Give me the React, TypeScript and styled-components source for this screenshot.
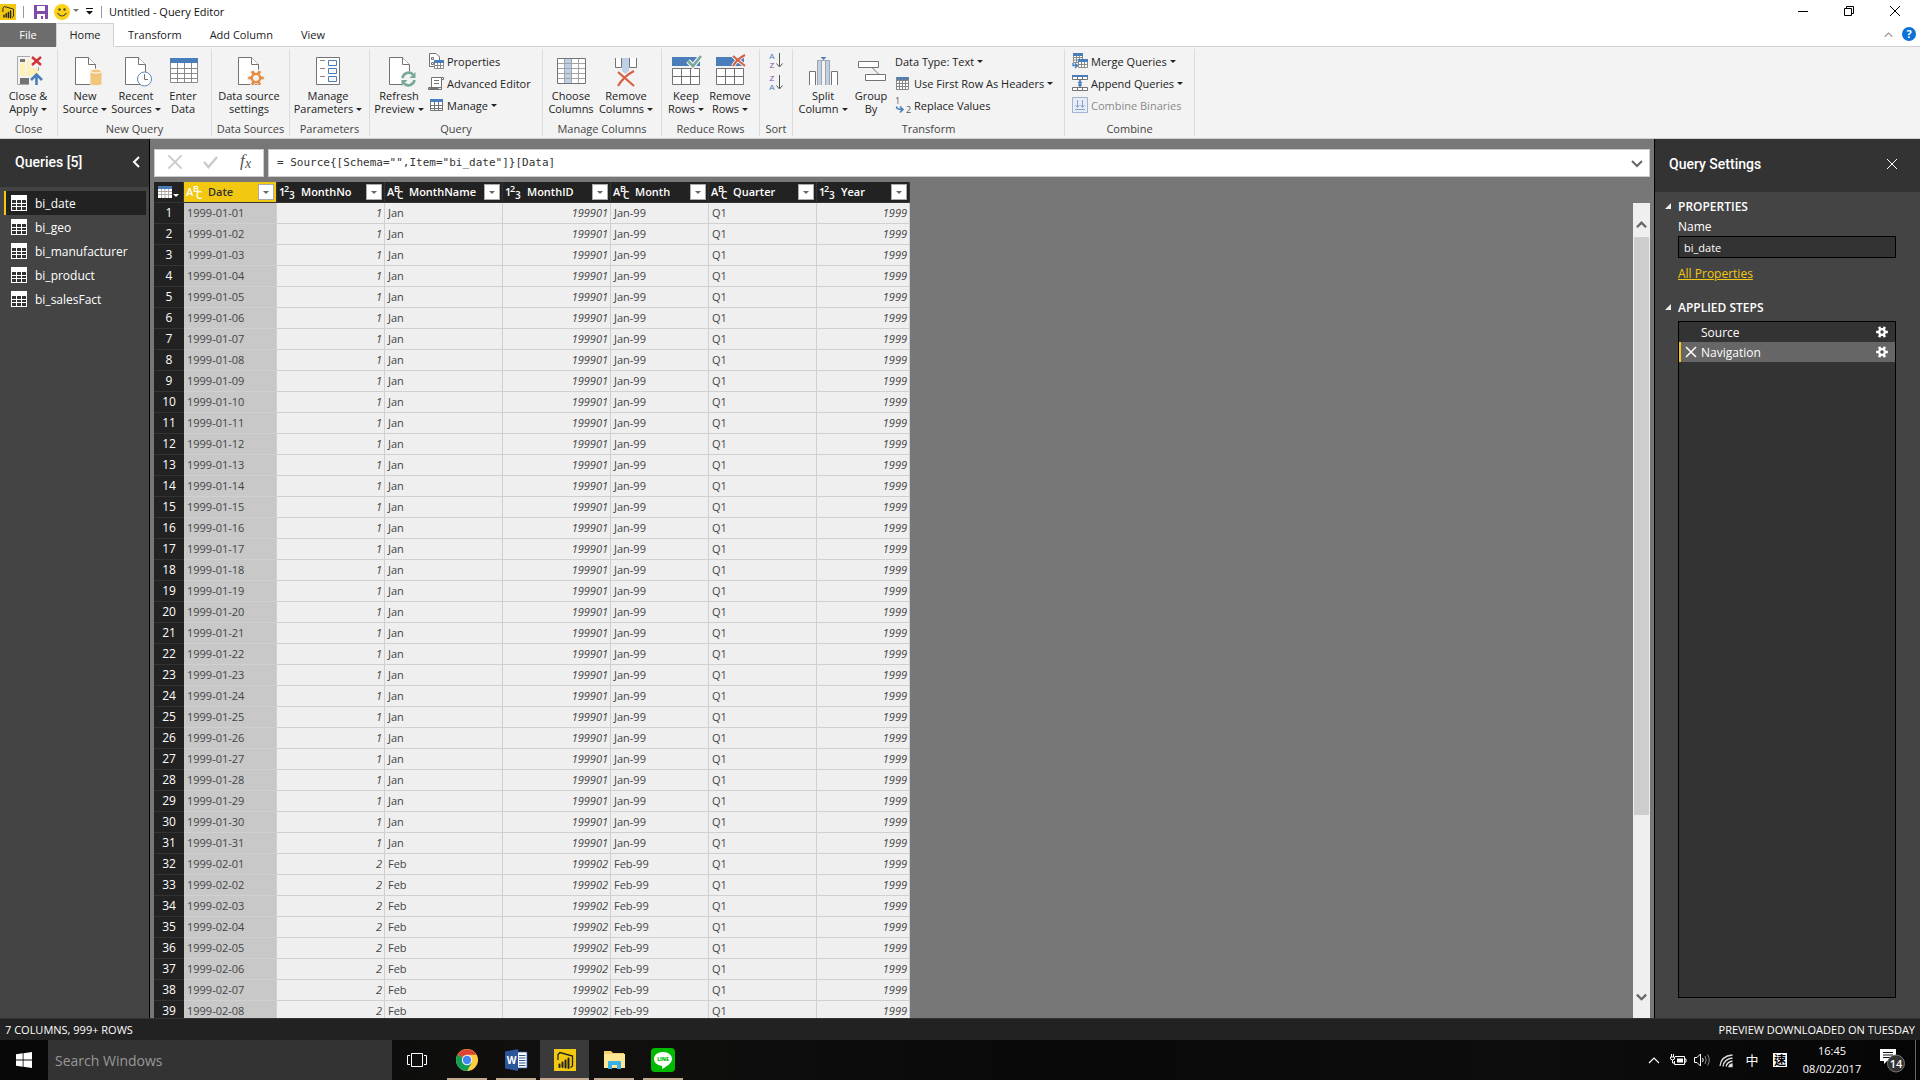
import React from "react";
import styled, { createGlobalStyle, css } from "styled-components";

const ui = '"Open Sans", "Noto Sans", "Noto Sans CJK TC", sans-serif';

const GlobalStyle = createGlobalStyle`
  *, *::before, *::after { box-sizing: border-box; }
  html, body { margin: 0; padding: 0; }
  body { font-family: ${ui}; font-size: 11px; color: #222; overflow: hidden; }
  button, input { font: inherit; color: inherit; border: 0; padding: 0; margin: 0; background: none; border-radius: 0; }
  svg { display: block; flex: none; overflow: visible; }
  h1, h2, h3, p, ul, ol { margin: 0; padding: 0; font-size: inherit; font-weight: inherit; list-style: none; }
`;

const App_ = styled.div`
  height: 100vh;
  display: flex;
  flex-direction: column;
  background: #fff;
`;

/* ---------- Title bar ---------- */

const TitleBar = styled.header`
  display: flex;
  align-items: center;
  height: 23px;
  flex: none;
  padding-right: 2px;
`;
const QuickAccess = styled.div`
  display: flex;
  align-items: center;
  flex: none;
  width: 109px;
`;
const QuickButton = styled.button<{ $w: number }>`
  display: flex;
  justify-content: center;
  align-items: center;
  width: ${(p) => p.$w}px;
  height: 18px;
`;
const Divider = styled.span`
  width: 1px;
  height: 12px;
  background: #999;
`;
const Title = styled.h1`
  flex: 1;
  color: #111;
`;
const WindowButton = styled.button`
  width: 46px;
  height: 20px;
  display: grid;
  place-items: center;
  padding-bottom: 2px;
`;

/* ---------- Tabs ---------- */

const TabBar = styled.nav`
  display: flex;
  align-items: stretch;
  height: 24px;
  flex: none;
  box-shadow: inset 0 -1px #d2d2d2;
`;
const Tab = styled.button<{ $kind?: "file" | "active" }>`
  padding: 0 14px 2px;
  ${(p) =>
    p.$kind === "file" &&
    css`
      background: #6d6d6d;
      color: #fff;
      width: 56px;
    `}
  ${(p) =>
    p.$kind === "active" &&
    css`
      background: #f3f3f3;
      border: 1px solid #d2d2d2;
      border-bottom-color: #f3f3f3;
      width: 58px;
      padding: 0 0 2px;
    `}
`;
const TabTools = styled.div`
  display: flex;
  align-items: center;
  gap: 9px;
  margin-left: auto;
  padding: 0 4px 2px 0;
`;
const PlainButton = styled.button`
  display: flex;
  align-items: center;
  justify-content: center;
`;

/* ---------- Ribbon ---------- */

const RibbonBar = styled.div`
  display: flex;
  flex: none;
  height: 92px;
  padding: 2px 0;
  background: #f3f3f3;
  border-bottom: 1px solid #cfd1cf;
`;
const Group = styled.section<{ $w: number }>`
  display: flex;
  flex-direction: column;
  flex: none;
  width: ${(p) => p.$w}px;
  border-right: 1px solid #dcdcdc;
`;
const GroupBody = styled.div<{ $pad?: number }>`
  display: flex;
  flex: 1;
  padding-left: ${(p) => p.$pad ?? 0}px;
`;
const GroupLabel = styled.h2`
  height: 15px;
  line-height: 15px;
  text-align: center;
  white-space: nowrap;
  color: #444;
`;
const LargeButton = styled.button<{ $w: number }>`
  width: ${(p) => p.$w}px;
  flex: none;
  display: flex;
  flex-direction: column;
  align-items: center;
  padding-top: 6px;
  gap: 2px;
  line-height: 13px;
  white-space: nowrap;
`;
const LargeLabel = styled.span`
  display: flex;
  flex-direction: column;
  align-items: center;
`;
const SmallStack = styled.div<{ $pad?: number }>`
  display: flex;
  flex-direction: column;
  padding-top: 1px;
  padding-left: ${(p) => p.$pad ?? 0}px;
`;
const SmallButton = styled.button<{ $muted?: boolean }>`
  display: flex;
  align-items: center;
  gap: 3px;
  height: 22px;
  white-space: nowrap;
  color: ${(p) => (p.$muted ? "#8a8a8a" : "inherit")};
`;
const Caret = styled.span<{ $tone?: string }>`
  display: inline-block;
  vertical-align: middle;
  margin: 0 0 2px 3px;
  border: 3px solid transparent;
  border-bottom: 0;
  border-top-color: ${(p) => p.$tone ?? "#222"};
`;

/* ---------- Workspace ---------- */

const Workspace = styled.main`
  flex: 1;
  min-height: 0;
  display: flex;
  background: #777;
`;
const QueriesPanel = styled.aside`
  width: 150px;
  flex: none;
  background: #444;
  border-right: 1px solid #000;
  color: #fff;
`;
const PanelHeader = styled.header<{ $h: number; $l: number; $r: number }>`
  display: flex;
  justify-content: space-between;
  align-items: center;
  height: ${(p) => p.$h}px;
  padding: 0 ${(p) => p.$r}px 3px ${(p) => p.$l}px;
  background: #333;
  font-family: Roboto, ${ui};
  font-size: 14px;
  font-weight: 500;
  color: #fff;
`;
const QueryList = styled.ul`
  padding: 4px 3px 0 4px;
`;
const QueryItem = styled.button<{ $on: boolean }>`
  display: flex;
  align-items: center;
  gap: 8px;
  width: 100%;
  height: 24px;
  padding-left: 5px;
  border-left: 2px solid ${(p) => (p.$on ? "#f2c811" : "transparent")};
  background: ${(p) => (p.$on ? "#222" : "transparent")};
  font-size: 12px;
  text-align: left;
`;

const Editor = styled.section`
  flex: 1;
  min-width: 0;
  display: flex;
  flex-direction: column;
  gap: 5px;
  padding: 10px 4px 0 4px;
`;
const FormulaRow = styled.div`
  display: flex;
  gap: 4px;
  height: 28px;
  flex: none;
`;
const FormulaTools = styled.div`
  display: flex;
  align-items: center;
  justify-content: space-around;
  width: 110px;
  padding: 0 0 2px 2px;
  background: #fff;
  border: 1px solid #ccc;
`;
const FormulaBox = styled.div`
  flex: 1;
  display: flex;
  align-items: center;
  padding: 0 6px 1px 8px;
  background: #fff;
  border: 1px solid #ccc;
`;
const FormulaInput = styled.input`
  flex: 1;
  outline: 0;
  font-family: "DejaVu Sans Mono", monospace;
  font-size: 11px;
  color: #333;
`;
const GridArea = styled.div`
  flex: 1;
  min-height: 0;
  display: flex;
  justify-content: space-between;
`;
const GridClip = styled.div`
  overflow: hidden;
`;
const Grid = styled.table`
  table-layout: fixed;
  width: 756px;
  border-collapse: separate;
  border-spacing: 0;
`;
const HeadCell = styled.th<{ $on?: boolean }>`
  height: 21px;
  padding: 0 2px;
  text-align: left;
  background: ${(p) => (p.$on ? "#f2c811" : "#222")};
  color: ${(p) => (p.$on ? "#333" : "#fff")};
  border-right: 1px solid #333;
  border-bottom: 1px solid #333;
`;
const HeadInner = styled.div`
  display: flex;
  align-items: center;
  gap: 6px;
  font-weight: 600;
`;
const HeadName = styled.span`
  flex: 1;
  padding-bottom: 2px;
`;
const FilterButton = styled.button`
  display: grid;
  place-items: center;
  width: 16px;
  height: 16px;
  background: #fff;
  border: 1px solid #aaa;
  & > span {
    margin: 0;
  }
`;
const CornerButton = styled.button`
  display: flex;
  align-items: center;
  justify-content: center;
  width: 100%;
  & > span {
    margin: 6px 0 0 1px;
  }
`;
const RowHead = styled.th`
  height: 21px;
  padding: 0;
  background: #222;
  color: #fff;
  font-size: 12px;
  font-weight: 400;
  line-height: 16px;
  text-align: center;
  border-bottom: 1px solid #333;
`;
const Cell = styled.td<{ $num?: boolean; $on?: boolean }>`
  height: 21px;
  padding: 0 2px 0 3px;
  line-height: 16px;
  color: #444;
  background: ${(p) => (p.$on ? "#c8c8c8" : "#efefef")};
  border-right: 1px solid #d0d0d0;
  border-bottom: 1px solid #d0d0d0;
  text-align: ${(p) => (p.$num ? "right" : "left")};
  font-style: ${(p) => (p.$num ? "italic" : "normal")};
`;
const ScrollBar = styled.div`
  display: flex;
  flex-direction: column;
  width: 17px;
  margin-top: 21px;
  background: #efefef;
`;
const ScrollButton = styled.button<{ $h: number; $end?: boolean }>`
  height: ${(p) => p.$h}px;
  flex: none;
  display: flex;
  justify-content: center;
  align-items: ${(p) => (p.$end ? "flex-start" : "flex-end")};
  padding: 3px 0 7px;
`;
const ScrollTrack = styled.div`
  flex: 1;
  padding: 0 1px;
`;
const ScrollThumb = styled.div`
  height: 77%;
  background: #cdcdcd;
`;

/* ---------- Settings ---------- */

const SettingsPanel = styled.aside`
  width: 266px;
  flex: none;
  display: flex;
  flex-direction: column;
  background: #444;
  border-left: 1px solid #000;
  color: #fff;
`;
const SettingsBody = styled.div`
  flex: 1;
  min-height: 0;
  display: flex;
  flex-direction: column;
  padding: 5px 24px 20px 10px;
`;
const SectionTitle = styled.h3`
  display: flex;
  align-items: center;
  gap: 7px;
  height: 18px;
  font-size: 12px;
  font-weight: 600;
`;
const Fields = styled.div`
  display: flex;
  flex-direction: column;
  align-items: flex-start;
  padding-left: 13px;
  margin-bottom: 16px;
  font-size: 12px;
`;
const FieldLabel = styled.label`
  height: 21px;
  line-height: 24px;
`;
const NameInput = styled.input`
  width: 100%;
  height: 22px;
  padding: 0 5px;
  background: #333;
  border: 1px solid #000;
  outline: 0;
  font-size: 11px;
`;
const PropertiesLink = styled.a`
  margin-top: 8px;
  line-height: 16px;
  color: #f2c811;
`;
const StepsList = styled.ol`
  flex: 1;
  margin: 5px 0 0 13px;
  background: #333;
  border: 1px solid #000;
`;
const Step = styled.li<{ $on?: boolean }>`
  display: flex;
  align-items: center;
  height: 20px;
  padding-right: 7px;
  border-left: 2px solid ${(p) => (p.$on ? "#f2c811" : "transparent")};
  background: ${(p) => (p.$on ? "#666" : "transparent")};
`;
const StepDelete = styled.button`
  display: grid;
  place-items: center;
  width: 20px;
`;
const StepName = styled.span`
  flex: 1;
  padding-top: 2px;
  font-size: 12px;
  line-height: 18px;
`;

/* ---------- Bottom bars ---------- */

const StatusBar = styled.footer`
  display: flex;
  justify-content: space-between;
  align-items: center;
  flex: none;
  height: 22px;
  padding: 0 5px;
  border-top: 1px solid #333;
  background: #222;
  color: #fff;
`;
const Taskbar = styled.nav`
  display: flex;
  flex: none;
  height: 40px;
  background: linear-gradient(90deg, #080808, #11100f 30%, #090909 55%, #0d0d0e 80%, #050505);
  color: #fff;
`;
const TaskButton = styled.button<{ $w?: number; $on?: boolean }>`
  display: grid;
  place-items: center;
  width: ${(p) => p.$w ?? 49}px;
  background: ${(p) => (p.$on ? "#3a3a3a" : "transparent")};
`;
const RunningButton = styled(TaskButton)`
  grid-template-rows: 1fr 2px;
  padding-top: 2px;
  &::after {
    content: "";
    width: ${(p) => (p.$on ? 49 : 40)}px;
    height: 2px;
    background: #c4aa8f;
  }
`;
const SearchInput = styled.input`
  width: 344px;
  padding: 0 7px;
  background: #333;
  font-size: 14px;
  outline: 0;
  &::placeholder {
    color: #989898;
    opacity: 1;
  }
`;
const Tray = styled.div`
  display: flex;
  align-items: stretch;
  margin-left: auto;
`;
const Ime = styled.span`
  font-family: "Noto Sans CJK TC", sans-serif;
  font-size: 13px;
  line-height: 16px;
`;
const ImeBox = styled(Ime)`
  width: 14px;
  height: 14px;
  line-height: 14px;
  font-size: 12px;
  font-weight: 700;
  background: #fff;
  color: #000;
`;
const Clock = styled.time`
  display: flex;
  flex-direction: column;
  justify-content: center;
  align-items: center;
  width: 74px;
  line-height: 18px;
`;
const Peek = styled.button`
  width: 5px;
  border-left: 1px solid #666;
`;

/* ---------- Icons ---------- */

const G = "#737373";
const B = "#4a7ebb";

const PowerBi = ({ size }: { size: number }) => (
  <svg width={size} height={size} viewBox="0 0 22 22">
    <rect width="22" height="22" fill="#f2c811" />
    <path d="M4 11V5.5L6 3.5L18.5 7V17L16.5 18.5" fill="none" stroke="#222" strokeWidth="1.3" />
    <path d="M5.5 15.5V18M8.5 13.5V18M11.5 11.5V18.5M14.5 9.5V19" stroke="#222" strokeWidth="2" strokeLinecap="round" />
  </svg>
);

const Page = ({ x = 5 }: { x?: number }) => (
  <g transform={`translate(${x} 2)`} fill="#fff" stroke={G}>
    <path d="M.5.5H13.5L20.5 7.5V27.5H.5Z" />
    <path d="M13.5.5V7.5H20.5" />
  </g>
);

const gearPath = (cx: number, cy: number, r: number, n: number) => {
  const pts: string[] = [];
  for (let i = 0; i < n; i++) {
    const a = (i * 2 * Math.PI) / n;
    const w = Math.PI / n;
    [[-0.62, 0.68], [-0.42, 1], [0.42, 1], [0.62, 0.68]].forEach(([o, k]) => {
      pts.push(`${(cx + Math.cos(a + o * w) * r * k).toFixed(2)} ${(cy + Math.sin(a + o * w) * r * k).toFixed(2)}`);
    });
  }
  return `M${pts.join("L")}Z`;
};

const Big = ({ children }: { children: React.ReactNode }) => (
  <svg width="32" height="32" viewBox="0 0 32 32" fill="none">
    {children}
  </svg>
);
const Small = ({ children }: { children: React.ReactNode }) => (
  <svg width="16" height="16" viewBox="0 0 16 16" fill="none">
    {children}
  </svg>
);

const CloseApplyIcon = () => (
  <Big>
    <path d="M5.500 1.500H18M5.500 1.500V29.500H17M26.500 16V12" stroke="#a8a8a8" />
    <rect x="8" y="4" width="5" height="3" fill={G} />
    <path d="M8 8H13V21H8ZM15 4H18V13L26 14V18L20 21H15Z" fill="#fff0b3" />
    <rect x="8" y="23" width="9" height="6" fill={G} />
    <path d="M20 2L29 10M29 2L20 10" stroke="#d13438" strokeWidth="2.4" />
    <path d="M24.500 30V20M19 25L24.500 19.500L30 25" stroke={B} strokeWidth="2.600" />
  </Big>
);
const NewSourceIcon = () => (
  <Big>
    <Page x={6} />
    <path d="M21 15V28.500C21 31.500 33 31.500 33 28.500V15Z" fill="#eec77c" stroke="#f3f3f3" />
    <ellipse cx="27" cy="16" rx="5.500" ry="2" fill="#eec77c" stroke="#fff" />
  </Big>
);
const RecentIcon = () => (
  <Big>
    <Page />
    <circle cx="24.500" cy="24" r="7" fill="#fff" stroke="#5b87b8" />
    <path d="M24.500 19V24.500H28" stroke={G} />
  </Big>
);
const EnterDataIcon = () => (
  <Big>
    <path d="M3 3H31V28H3Z" fill="#fff" />
    <path d="M3.500 8V27.500H30.500V8M3 13.500H31M3 18.500H31M3 23.500H31M10.500 8V27M17.500 8V27M24.500 8V27" stroke="#8a8a8a" />
    <rect x="3" y="3" width="28" height="5" fill={B} />
  </Big>
);
const DataSettingsIcon = () => (
  <Big>
    <Page />
    <path d={gearPath(23, 23, 8.500, 6)} fill="#e98b3f" stroke="#f3f3f3" />
    <circle cx="23" cy="23" r="3" fill="#f3f3f3" />
  </Big>
);
const ParametersIcon = () => (
  <Big>
    <path d="M4.500 2.500H27.500V29.500H4.500Z" fill="#fff" stroke={G} />
    <path d="M8 5.500H13M8 13.500H13M8 21.500H13" stroke="#8a8a8a" />
    <path d="M16.500 5.500H24.500V10.500H16.500ZM16.500 13.500H24.500V18.500H16.500ZM16.500 21.500H24.500V26.500H16.500Z" stroke={B} />
  </Big>
);
const RefreshIcon = () => (
  <Big>
    <Page x={6} />
    <circle cx="25.500" cy="24" r="8" fill="#f3f3f3" />
    <path d="M19.500 23A6.200 6.200 0 0 1 30 19.500M31.500 25A6.200 6.200 0 0 1 21 28.500" stroke="#77a998" strokeWidth="2.600" />
    <path d="M32.500 17V23H26.500ZM18.500 31V25H24.500Z" fill="#77a998" />
  </Big>
);
const ChooseColumnsIcon = () => (
  <Big>
    <path d="M2.500 3.500H30.500V28.500H2.500Z" fill="#fff" />
    <rect x="10" y="4" width="6" height="24" fill="#bdd0e8" />
    <path d="M3 8.500H30M3 13.500H30M3 18.500H30M3 23.500H30M9.500 4V28M16.500 4V28M23.500 4V28" stroke="#a3a3a3" />
    <path d="M2.500 3.500H30.500V28.500H2.500Z" stroke={G} />
  </Big>
);
const RemoveColumnsIcon = () => (
  <Big>
    <path d="M5.500 3V12.500H11.500V3M19.500 3V12.500H26.500V3" fill="#fff" stroke={G} />
    <path d="M12 3H19V16L15.500 19L12 16Z" fill="#bdd0e8" />
    <path d="M8 17L24 31M24 16Q14 21 8 31" stroke="#d45f41" strokeWidth="2.200" />
  </Big>
);
const RowsIcon = ({ remove }: { remove?: boolean }) => (
  <Big>
    <rect x="2" y="2" width="28" height="9" fill={B} />
    <path d="M2.500 13.500H29.500V29.500H2.500ZM2.500 21.500H29.500M11.500 13.500V29.500M20.500 13.500V29.500" fill="#fff" stroke={G} />
    {remove ? (
      <>
        <path d="M19 1L31 11M31 0Q23 4 19 11" stroke="#f3f3f3" strokeWidth="4" />
        <path d="M19 1L31 11M31 0Q23 4 19 11" stroke="#d45f41" strokeWidth="2" />
      </>
    ) : (
      <>
        <path d="M18 6L23 11L31 1" stroke="#f3f3f3" strokeWidth="5" />
        <path d="M18 6L23 11L31 1" stroke="#77a998" strokeWidth="2.600" />
      </>
    )}
  </Big>
);
const SplitIcon = () => (
  <Big>
    <path d="M3 17H8V30H3ZM25 17H30V30H25Z" fill="#fff" />
    <path d="M2.500 30V16.500H8.500V30M30.500 30V16.500H24.500V30" stroke={G} />
    <rect x="10" y="5" width="13" height="25" fill="#bdd0e8" />
    <rect x="15" y="6" width="3" height="24" fill="#f3f3f3" />
    <path d="M10.500 30V5.500H22.500V30M14.500 6V30M18.500 6V30" stroke="#a3a3a3" />
    <path d="M13.500 2H19.500L16.500 5Z" fill={B} />
  </Big>
);
const GroupByIcon = () => (
  <Big>
    <path d="M3.500 6.500H23.500V12.500H3.500ZM10.500 19.500H30.500V25.500H10.500Z" fill="#fff" stroke={G} />
    <path d="M17.500 13L23.500 19" stroke={G} />
  </Big>
);
const TableIcon = ({ grid = G }: { grid?: string }) => (
  <Small>
    <rect x="2" y="2" width="13" height="12" fill="#fff" />
    <path d="M2.500 5V13.500H14.500V5M2 8.500H15M2 11.500H15M6.500 5V13M10.500 5V13" stroke={grid} />
    <rect x="2" y="2" width="13" height="3" fill={B} />
  </Small>
);
const PropertiesIcon = () => (
  <Small>
    <path d="M1.500 .5H8L11.500 4V13.500H1.500Z" fill="#fff" stroke={G} />
    <path d="M3.500 4.500H5.500V6.500H3.500ZM3.500 9.500H5.500V11.500H3.500Z" stroke={G} />
    <rect x="6" y="7" width="10" height="9" fill="#fff" />
    <path d="M6.500 9V15.500H15.500V9M6 12.500H16M9.500 9V15M12.500 9V15" stroke="#8a8a8a" />
    <rect x="6" y="7" width="10" height="3" fill={B} />
  </Small>
);
const AdvancedIcon = () => (
  <Small>
    <path d="M3.500 2.500H13.500V12.500H3.500Z" fill="#fff" stroke={G} />
    <path d="M13.500 5V2.500H15.500V4.500H13.500M6 5.500H11M6 8.500H11M.5 12.500H10V14.500H.5ZM10 14.500H13.500V12" stroke={G} />
    <path d="M1 12.500H10V15H2Z" fill={G} />
  </Small>
);
const SortIcon = ({ top, bottom }: { top: string; bottom: string }) => (
  <svg width="16" height="18" viewBox="0 0 16 18" fontFamily="Liberation Sans, sans-serif" fontSize="8" textAnchor="middle">
    <text x="4" y="7" fill={top === "A" ? B : "#8a4db0"}>{top}</text>
    <text x="4" y="16" fill={bottom === "A" ? B : "#8a4db0"}>{bottom}</text>
    <path d="M11.500 1V14M8.500 11.500L11.500 15L14.500 11.500" stroke="#555" fill="none" />
  </svg>
);
const HeaderRowsIcon = () => (
  <Small>
    <rect x="1" y="2" width="13" height="13" fill="#fff" />
    <rect x="1" y="2" width="13" height="3" fill={B} />
    <path d="M1.500 2V14.500H13.500V2M1 5.500H14M1 8.500H14M1 11.500H14M4.500 3V14M7.500 3V14M10.500 3V14" stroke="#858585" />
  </Small>
);
const ReplaceIcon = () => (
  <svg width="16" height="18" viewBox="0 0 16 18" fontFamily={ui} fontSize="9" fill="#555">
    <text x="0" y="8">1</text>
    <text x="11" y="17">2</text>
    <path d="M1.500 10.500Q1.500 13.500 7 13.500M5 10.500L8 13.500L5 16.500" stroke={B} strokeWidth="1.600" fill="none" />
  </svg>
);
const MergeIcon = () => (
  <Small>
    <path d="M1.500 1.500H10.500V9.500H1.500ZM1 4.500H11M1 7H11M4.500 2V9M7.500 2V9" fill="#fff" stroke="#8a8a8a" />
    <rect x="1" y="0" width="10" height="3" fill={B} />
    <path d="M6.500 7.500H15.500V14.500H6.500ZM6 11.500H16M9.500 8V14M12.500 8V14" fill="#fff" stroke="#8a8a8a" />
    <rect x="6" y="6" width="10" height="3" fill={B} />
    <path d="M1 10V12.500H5M3 10.500L5.500 12.500L3 15" stroke={B} strokeWidth="1.400" />
  </Small>
);
const AppendIcon = () => (
  <Small>
    <path d="M.5 1.500H15.500V4.500H.5ZM5.500 1V4M10.500 1V4M.5 12.500H15.500V15.500H.5ZM5.500 12V15M10.500 12V15" fill="#fff" stroke={G} />
    <rect x="0" y="0" width="16" height="2" fill={B} />
    <path d="M6 7.500H10M8 5V12M6 10H10" stroke={B} strokeWidth="1.600" />
  </Small>
);
const BinariesIcon = () => (
  <Small>
    <path d="M.5 .5H15.500V15.500H.5Z" fill="#e6edf7" stroke="#9fb2d0" />
    <path d="M5.500 3V10M3.500 8L5.500 10.500L7.500 8M10.500 3V10M8.500 8L10.500 10.500L12.500 8M3 12.500H13" stroke="#8ea3c5" />
  </Small>
);
const QueryIcon = () => (
  <svg width="16" height="16" viewBox="0 0 16 16">
    <rect width="16" height="16" fill="#fff" />
    <path d="M1 5H5V8H1ZM6 5H10V8H6ZM11 5H15V8H11ZM1 9H5V11H1ZM6 9H10V11H6ZM11 9H15V11H11ZM1 12H5V15H1ZM6 12H10V15H6ZM11 12H15V15H11Z" fill="#333" />
  </svg>
);
const TypeIcon = ({ num }: { num?: boolean }) => (
  <svg width="16" height="18" viewBox="0 0 16 18" fill="#fff" fontFamily={ui} fontWeight="600">
    <text x="0" y="13" fontSize="11">{num ? "1" : "A"}</text>
    <text x={num ? 5 : 7} y="9" fontSize="9">{num ? "2" : "B"}</text>
    <text x="10" y="16" fontSize="10">{num ? "3" : "C"}</text>
  </svg>
);
const Chevron = ({ dir, w = 11, color = "#666", weight = 2 }: { dir: "up" | "down" | "left"; w?: number; color?: string; weight?: number }) => (
  <svg width={w} height={w} viewBox="0 0 12 12" fill="none" stroke={color} strokeWidth={weight}>
    <path d={dir === "up" ? "M1 9L6 4L11 9" : dir === "down" ? "M1 4L6 9L11 4" : "M9 1L4 6L9 11"} />
  </svg>
);
const Cross = ({ size, color, weight = 1 }: { size: number; color: string; weight?: number }) => (
  <svg width={size} height={size} viewBox="0 0 12 12" fill="none" stroke={color} strokeWidth={weight}>
    <path d="M1 1L11 11M11 1L1 11" />
  </svg>
);
const StepGear = () => (
  <svg width="12" height="12" viewBox="0 0 12 12">
    <path d={gearPath(6, 6, 6, 6)} fill="#fff" />
    <circle cx="6" cy="6" r="1.700" fill="#444" />
  </svg>
);
const SectionArrow = () => (
  <svg width="6" height="6" viewBox="0 0 6 6">
    <path d="M6 0V6H0Z" fill="#eee" />
  </svg>
);
const ChromeIcon = () => (
  <svg width="22" height="22" viewBox="0 0 22 22">
    <circle cx="11" cy="11" r="11" fill="#ffcd40" />
    <path d="M11 11L1.500 5.500A11 11 0 0 0 11 22L15.800 13.700Z" fill="#0f9d58" />
    <path d="M11 11L1.500 5.500A11 11 0 0 1 20.500 5.700H11Z" fill="#db4437" />
    <circle cx="11" cy="11" r="5.200" fill="#f4f4f4" />
    <circle cx="11" cy="11" r="4.200" fill="#4285f4" />
  </svg>
);
const WordIcon = () => (
  <svg width="22" height="22" viewBox="0 0 22 22">
    <path d="M12 3H22V19H12Z" fill="#fff" stroke="#2b579a" strokeWidth=".8" />
    <path d="M14 6.500H20.500M14 9H20.500M14 11.500H20.500M14 14H20.500M14 16.500H20.500" stroke="#2b579a" />
    <path d="M0 2.500L13 0V22L0 19.500Z" fill="#2b579a" />
    <text x="6.500" y="15" fontSize="10" fontWeight="700" textAnchor="middle" fill="#fff" fontFamily={ui}>W</text>
  </svg>
);
const ExplorerIcon = () => (
  <svg width="22" height="20" viewBox="0 0 22 20">
    <path d="M1 1H8L10 3H21V18H1Z" fill="#f5cf6b" />
    <path d="M1 4H22V18H1Z" fill="#ffe596" />
    <path d="M5 19V12Q5 11 6 11H17Q18 11 18 12V19H14V15H9V19Z" fill="#38b0e8" />
  </svg>
);
const LineIcon = () => (
  <svg width="24" height="24" viewBox="0 0 24 24">
    <rect width="24" height="24" rx="4" fill="#00b900" />
    <path d="M12 4C6.500 4 3 7.200 3 11C3 14.500 6 17 10.500 17.800C11.500 18 11.200 19 11 21C14 19.500 21 15.500 21 11C21 7.200 17.500 4 12 4Z" fill="#fff" />
    <text x="12" y="13" fontSize="5" fontWeight="800" textAnchor="middle" fill="#00b900" fontFamily={ui}>LINE</text>
  </svg>
);

/* ---------- Data ---------- */

const columns = [
  { name: "Date", num: false, w: 93 },
  { name: "MonthNo", num: true, w: 108 },
  { name: "MonthName", num: false, w: 118 },
  { name: "MonthID", num: true, w: 108 },
  { name: "Month", num: false, w: 98 },
  { name: "Quarter", num: false, w: 108 },
  { name: "Year", num: true, w: 93 },
];

const rows = Array.from({ length: 39 }, (_, i) => {
  const feb = i >= 31;
  const day = String(feb ? i - 30 : i + 1).padStart(2, "0");
  const m = feb ? "Feb" : "Jan";
  const n = feb ? "2" : "1";
  return [`1999-0${n}-${day}`, n, m, `19990${n}`, `${m}-99`, "Q1", "1999"];
});

const queries = ["bi_date", "bi_geo", "bi_manufacturer", "bi_product", "bi_salesFact"];

const Large = ({ w, icon, top, bottom, menu }: { w: number; icon: React.ReactNode; top: string; bottom: string; menu?: boolean }) => (
  <LargeButton $w={w}>
    {icon}
    <LargeLabel>
      <span>{top}</span>
      <span>
        {bottom}
        {menu && <Caret />}
      </span>
    </LargeLabel>
  </LargeButton>
);

const Ribbon = () => (
  <RibbonBar>
    <Group $w={58}>
      <GroupBody>
        <Large w={56} icon={<CloseApplyIcon />} top="Close &" bottom="Apply" menu />
      </GroupBody>
      <GroupLabel>Close</GroupLabel>
    </Group>
    <Group $w={154}>
      <GroupBody>
        <Large w={54} icon={<NewSourceIcon />} top="New" bottom="Source" menu />
        <Large w={48} icon={<RecentIcon />} top="Recent" bottom="Sources" menu />
        <Large w={46} icon={<EnterDataIcon />} top="Enter" bottom="Data" />
      </GroupBody>
      <GroupLabel>New Query</GroupLabel>
    </Group>
    <Group $w={78}>
      <GroupBody>
        <Large w={74} icon={<DataSettingsIcon />} top="Data source" bottom="settings" />
      </GroupBody>
      <GroupLabel>Data Sources</GroupLabel>
    </Group>
    <Group $w={80}>
      <GroupBody>
        <Large w={76} icon={<ParametersIcon />} top="Manage" bottom="Parameters" menu />
      </GroupBody>
      <GroupLabel>Parameters</GroupLabel>
    </Group>
    <Group $w={173}>
      <GroupBody>
        <Large w={58} icon={<RefreshIcon />} top="Refresh" bottom="Preview" menu />
        <SmallStack>
          <SmallButton><PropertiesIcon />Properties</SmallButton>
          <SmallButton><AdvancedIcon />Advanced Editor</SmallButton>
          <SmallButton><TableIcon /><span>Manage<Caret /></span></SmallButton>
        </SmallStack>
      </GroupBody>
      <GroupLabel>Query</GroupLabel>
    </Group>
    <Group $w={119}>
      <GroupBody>
        <Large w={56} icon={<ChooseColumnsIcon />} top="Choose" bottom="Columns" />
        <Large w={54} icon={<RemoveColumnsIcon />} top="Remove" bottom="Columns" menu />
      </GroupBody>
      <GroupLabel>Manage Columns</GroupLabel>
    </Group>
    <Group $w={98}>
      <GroupBody $pad={2}>
        <Large w={44} icon={<RowsIcon />} top="Keep" bottom="Rows" menu />
        <Large w={44} icon={<RowsIcon remove />} top="Remove" bottom="Rows" menu />
      </GroupBody>
      <GroupLabel>Reduce Rows</GroupLabel>
    </Group>
    <Group $w={33}>
      <GroupBody>
        <SmallStack $pad={8}>
          <SmallButton aria-label="Sort ascending"><SortIcon top="A" bottom="Z" /></SmallButton>
          <SmallButton aria-label="Sort descending"><SortIcon top="Z" bottom="A" /></SmallButton>
        </SmallStack>
      </GroupBody>
      <GroupLabel>Sort</GroupLabel>
    </Group>
    <Group $w={272}>
      <GroupBody $pad={4}>
        <Large w={52} icon={<SplitIcon />} top="Split" bottom="Column" menu />
        <Large w={44} icon={<GroupByIcon />} top="Group" bottom="By" />
        <SmallStack $pad={2}>
          <SmallButton><span>Data Type: Text<Caret /></span></SmallButton>
          <SmallButton><HeaderRowsIcon /><span>Use First Row As Headers<Caret /></span></SmallButton>
          <SmallButton><ReplaceIcon />Replace Values</SmallButton>
        </SmallStack>
      </GroupBody>
      <GroupLabel>Transform</GroupLabel>
    </Group>
    <Group $w={130}>
      <GroupBody>
        <SmallStack $pad={7}>
          <SmallButton><MergeIcon /><span>Merge Queries<Caret /></span></SmallButton>
          <SmallButton><AppendIcon /><span>Append Queries<Caret /></span></SmallButton>
          <SmallButton $muted><BinariesIcon />Combine Binaries</SmallButton>
        </SmallStack>
      </GroupBody>
      <GroupLabel>Combine</GroupLabel>
    </Group>
  </RibbonBar>
);

const DataGrid = () => (
  <Grid>
    <colgroup>
      <col style={{ width: 30 }} />
      {columns.map((c) => (
        <col key={c.name} style={{ width: c.w }} />
      ))}
    </colgroup>
    <thead>
      <tr>
        <HeadCell>
          <CornerButton aria-label="Table options">
            <svg width="14" height="12" viewBox="0 0 14 12">
              <rect width="14" height="12" fill="#fff" />
              <rect width="14" height="3" fill={B} />
              <path d="M0 5.500H14M0 8.500H14M3.500 3V12M7 3V12M10.500 3V12" stroke="#999" strokeWidth=".8" />
            </svg>
            <Caret $tone="#fff" />
          </CornerButton>
        </HeadCell>
        {columns.map((c, i) => (
          <HeadCell key={c.name} $on={i === 0}>
            <HeadInner>
              <TypeIcon num={c.num} />
              <HeadName>{c.name}</HeadName>
              <FilterButton aria-label={`Filter ${c.name}`}>
                <Caret $tone="#666" />
              </FilterButton>
            </HeadInner>
          </HeadCell>
        ))}
      </tr>
    </thead>
    <tbody>
      {rows.map((row, r) => (
        <tr key={row[0]}>
          <RowHead>{r + 1}</RowHead>
          {row.map((v, c) => (
            <Cell key={c} $on={c === 0} $num={columns[c].num}>
              {v}
            </Cell>
          ))}
        </tr>
      ))}
    </tbody>
  </Grid>
);

export default function App() {
  return (
    <App_>
      <GlobalStyle />
      <TitleBar>
        <QuickAccess>
          <PowerBi size={16} />
          <QuickButton $w={15} as="span"><Divider /></QuickButton>
          <QuickButton $w={20} aria-label="Save">
            <svg width="14" height="14" viewBox="0 0 14 14">
              <path d="M0 0H14V14H0Z" fill="#7e4ba8" />
              <path d="M3 1H11V6H3ZM3 9H11V14H9V11H7V14H3Z" fill="#fff" />
            </svg>
          </QuickButton>
          <QuickButton $w={30} aria-label="Send feedback">
            <svg width="16" height="16" viewBox="0 0 16 16">
              <circle cx="8" cy="8" r="8" fill="#fcd116" />
              <circle cx="5.500" cy="5.500" r="1.200" fill="#444" />
              <circle cx="10.500" cy="5.500" r="1.200" fill="#444" />
              <path d="M3.500 9Q8 15 12.500 9" fill="none" stroke="#444" strokeWidth="1.200" />
            </svg>
            <Caret $tone="#777" />
          </QuickButton>
          <QuickButton $w={16} aria-label="Customize toolbar">
            <svg width="7" height="7" viewBox="0 0 7 7">
              <path d="M0 0H7V1H0ZM0 3H7L3.500 6.500Z" fill="#111" />
            </svg>
          </QuickButton>
          <QuickButton $w={9} as="span"><Divider /></QuickButton>
        </QuickAccess>
        <Title>Untitled - Query Editor</Title>
        <WindowButton aria-label="Minimize">
          <svg width="10" height="10" viewBox="0 0 10 10"><path d="M0 5.500H10" stroke="#000" /></svg>
        </WindowButton>
        <WindowButton aria-label="Restore">
          <svg width="10" height="10" viewBox="0 0 10 10"><path d="M.5 2.500H7.500V9.500H.5ZM2.500 2V.5H9.500V7.500H8" fill="none" stroke="#000" /></svg>
        </WindowButton>
        <WindowButton aria-label="Close"><Cross size={12} color="#000" /></WindowButton>
      </TitleBar>
      <TabBar>
        <Tab $kind="file">File</Tab>
        <Tab $kind="active">Home</Tab>
        <Tab>Transform</Tab>
        <Tab>Add Column</Tab>
        <Tab>View</Tab>
        <TabTools>
          <PlainButton aria-label="Collapse ribbon"><Chevron dir="up" w={9} color="#999" weight={1.500} /></PlainButton>
          <PlainButton aria-label="Help">
            <svg width="14" height="14" viewBox="0 0 14 14">
              <circle cx="7" cy="7" r="7" fill="#0a72d8" />
              <text x="7" y="11" fontSize="11" fontWeight="700" textAnchor="middle" fill="#fff" fontFamily={ui}>?</text>
            </svg>
          </PlainButton>
        </TabTools>
      </TabBar>
      <Ribbon />
      <Workspace>
        <QueriesPanel>
          <PanelHeader $h={48} $l={15} $r={7}>
            <h2>Queries [5]</h2>
            <PlainButton aria-label="Collapse queries"><Chevron dir="left" w={12} color="#fff" /></PlainButton>
          </PanelHeader>
          <QueryList>
            {queries.map((q, i) => (
              <li key={q}>
                <QueryItem $on={i === 0}><QueryIcon />{q}</QueryItem>
              </li>
            ))}
          </QueryList>
        </QueriesPanel>
        <Editor>
          <FormulaRow>
            <FormulaTools>
              <PlainButton aria-label="Cancel"><Cross size={16} color="#ccc" weight={1.500} /></PlainButton>
              <PlainButton aria-label="Accept">
                <svg width="15" height="13" viewBox="0 0 15 13"><path d="M1 6L5.500 11L14 1" fill="none" stroke="#ccc" strokeWidth="2.500" /></svg>
              </PlainButton>
              <PlainButton aria-label="Insert function">
                <svg width="14" height="18" viewBox="0 0 14 18" fill="#555" fontFamily="'Liberation Serif', serif" fontStyle="italic">
                  <text x="1" y="13" fontSize="17">f</text>
                  <text x="6" y="15" fontSize="14">x</text>
                </svg>
              </PlainButton>
            </FormulaTools>
            <FormulaBox>
              <FormulaInput aria-label="Formula" defaultValue={'= Source{[Schema="",Item="bi_date"]}[Data]'} />
              <PlainButton aria-label="Expand formula bar"><Chevron dir="down" w={12} /></PlainButton>
            </FormulaBox>
          </FormulaRow>
          <GridArea>
            <GridClip>
              <DataGrid />
            </GridClip>
            <ScrollBar>
              <ScrollButton $h={34} aria-label="Scroll up"><Chevron dir="up" weight={2.500} /></ScrollButton>
              <ScrollTrack><ScrollThumb /></ScrollTrack>
              <ScrollButton $h={30} $end aria-label="Scroll down"><Chevron dir="down" weight={2.500} /></ScrollButton>
            </ScrollBar>
          </GridArea>
        </Editor>
        <SettingsPanel>
          <PanelHeader $h={53} $l={14} $r={22}>
            <h2>Query Settings</h2>
            <PlainButton aria-label="Close settings"><Cross size={12} color="#fff" /></PlainButton>
          </PanelHeader>
          <SettingsBody>
            <SectionTitle><SectionArrow />PROPERTIES</SectionTitle>
            <Fields>
              <FieldLabel htmlFor="query-name">Name</FieldLabel>
              <NameInput id="query-name" defaultValue="bi_date" />
              <PropertiesLink href="#properties">All Properties</PropertiesLink>
            </Fields>
            <SectionTitle><SectionArrow />APPLIED STEPS</SectionTitle>
            <StepsList>
              <Step>
                <StepDelete as="span" />
                <StepName>Source</StepName>
                <PlainButton aria-label="Source settings"><StepGear /></PlainButton>
              </Step>
              <Step $on>
                <StepDelete aria-label="Delete step"><Cross size={12} color="#fff" weight={1.500} /></StepDelete>
                <StepName>Navigation</StepName>
                <PlainButton aria-label="Navigation settings"><StepGear /></PlainButton>
              </Step>
            </StepsList>
          </SettingsBody>
        </SettingsPanel>
      </Workspace>
      <StatusBar>
        <span>7 COLUMNS, 999+ ROWS</span>
        <span>PREVIEW DOWNLOADED ON TUESDAY</span>
      </StatusBar>
      <Taskbar>
        <TaskButton $w={48} aria-label="Start">
          <svg width="16" height="16" viewBox="0 0 16 16">
            <path d="M0 2.300L6.700 1.300V7.600H0ZM7.500 1.200L16 0V7.600H7.500ZM0 8.400H6.700V14.700L0 13.700ZM7.500 8.400H16V16L7.500 14.800Z" fill="#fff" />
          </svg>
        </TaskButton>
        <SearchInput aria-label="Search Windows" placeholder="Search Windows" />
        <TaskButton $w={50} aria-label="Task view">
          <svg width="20" height="14" viewBox="0 0 20 14" fill="none" stroke="#fff">
            <path d="M4.500 .5H15.500V13.500H4.500ZM3 2.500H.5V11.500H3M17 2.500H19.500V11.500H17" />
          </svg>
        </TaskButton>
        <RunningButton aria-label="Chrome"><ChromeIcon /></RunningButton>
        <RunningButton aria-label="Word"><WordIcon /></RunningButton>
        <RunningButton $on aria-label="Power BI"><PowerBi size={22} /></RunningButton>
        <RunningButton aria-label="File Explorer"><ExplorerIcon /></RunningButton>
        <RunningButton aria-label="Line"><LineIcon /></RunningButton>
        <Tray>
          <TaskButton $w={24} aria-label="Show hidden icons"><Chevron dir="up" w={12} color="#fff" weight={1.200} /></TaskButton>
          <TaskButton $w={24} aria-label="Battery">
            <svg width="16" height="12" viewBox="0 0 16 12" fill="none" stroke="#fff">
              <path d="M5 2.500H14.500V10.500H4.500V7M14.500 5H16V8H14.500" />
              <rect x="7" y="4.500" width="6" height="4" fill="#fff" stroke="none" />
              <path d="M.5 3H4.500V5Q2.500 7 .5 5ZM1.500 0V3M3.500 0V3M2.500 6V9H4" />
            </svg>
          </TaskButton>
          <TaskButton $w={24} aria-label="Volume">
            <svg width="16" height="14" viewBox="0 0 16 14" fill="none" stroke="#fff">
              <path d="M.5 4.500H3L6.500 1V13L3 9.500H.5Z" />
              <path d="M8.500 5Q10 7 8.500 9" />
              <path d="M11 3Q13.500 7 11 11M13.500 1.500Q17 7 13.500 12.500" stroke="#888" />
            </svg>
          </TaskButton>
          <TaskButton $w={25} aria-label="Wi-Fi">
            <svg width="13" height="13" viewBox="0 0 13 13" fill="none" stroke="#ddd" strokeWidth="1.300">
              <path d="M0 12Q1 2 12.500 1M3 12.500Q4 5 12.500 4M6 12.500Q7 8 12.500 7" />
              <path d="M9 12.500Q9.500 10.500 12 10V12.500Z" fill="#fff" />
            </svg>
          </TaskButton>
          <TaskButton $w={26} aria-label="Input language"><Ime>中</Ime></TaskButton>
          <TaskButton $w={30} aria-label="Input method"><ImeBox>速</ImeBox></TaskButton>
          <Clock dateTime="2017-02-08T16:45">
            <span>16:45</span>
            <span>08/02/2017</span>
          </Clock>
          <TaskButton $w={46} aria-label="Notifications">
            <svg width="24" height="24" viewBox="0 0 24 24">
              <path d="M0 1H16V13H7L4 16V13H0Z" fill="#fff" />
              <path d="M3 4.500H13M3 7H13M3 9.500H10" stroke="#111" />
              <circle cx="16" cy="15.500" r="8.500" fill="#333" stroke="#777" />
              <text x="16" y="20" fontSize="11" fontWeight="600" textAnchor="middle" fill="#fff" fontFamily={ui}>14</text>
            </svg>
          </TaskButton>
          <Peek aria-label="Show desktop" />
        </Tray>
      </Taskbar>
    </App_>
  );
}
